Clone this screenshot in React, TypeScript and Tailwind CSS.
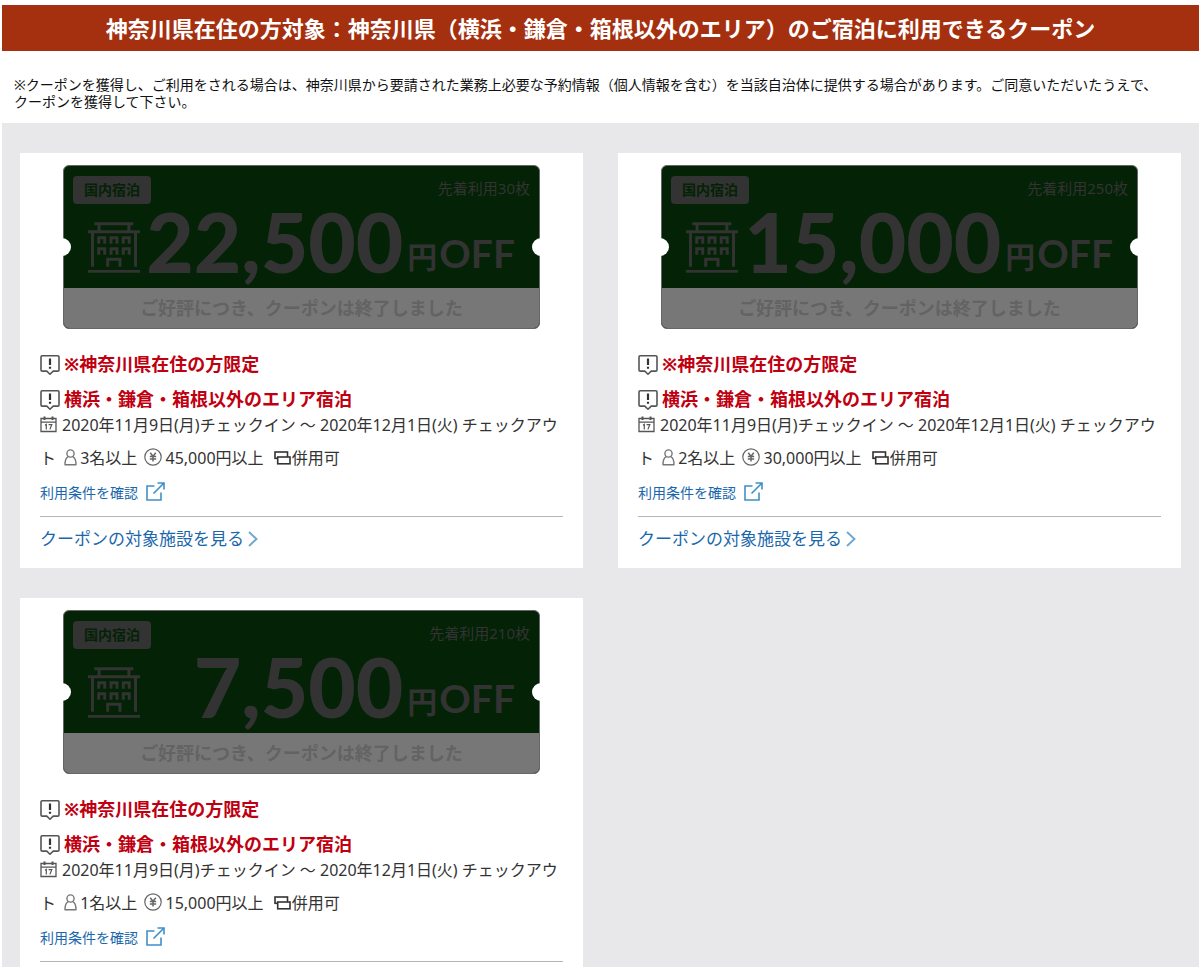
type Coupon = {
  id: string;
  amount: string;
  limit: string;
  people: string;
  minimum: string;
};

const coupons: Coupon[] = [
  { id: "c22500", amount: "22,500", limit: "先着利用30枚", people: "3名以上", minimum: "45,000円以上" },
  { id: "c15000", amount: "15,000", limit: "先着利用250枚", people: "2名以上", minimum: "30,000円以上" },
  { id: "c7500", amount: "7,500", limit: "先着利用210枚", people: "1名以上", minimum: "15,000円以上" },
];

function HotelIcon() {
  return (
    <svg viewBox="0 0 157 152" className="h-[51px] w-[52px] shrink-0" fill="#333333" aria-hidden="true">
      <path fillRule="evenodd" d="M19 0h118v9h-9v15h29v9h-9v101h-9V33H18v101H9V33H0v-9h29V9H19zM38 9v15h81V9z" />
      <path d="M0 144h157v8H0z" />
      <path d="M28 42h27v23h-9V51h-9v14h-9zM65 42h27v23h-9V51h-9v14h-9zM102 42h27v23h-9V51h-9v14h-9z" />
      <path d="M28 75h27v23h-9V84h-9v14h-9zM65 75h27v23h-9V84h-9v14h-9zM102 75h27v23h-9V84h-9v14h-9z" />
      <path d="M55 107h46v27h-9v-18H64v18h-9z" />
    </svg>
  );
}

function AlertIcon() {
  return (
    <svg viewBox="0 0 20 22" className="mt-[2px] h-[22px] w-5 shrink-0" fill="none" stroke="#555555" strokeWidth="1.6" aria-hidden="true">
      <path d="M2.200 1.700h15.600q1.200 0 1.200 1.200v13q0 1.200-1.200 1.200h-4.600L10 20.200l-3.200-3.100H2.200Q1 17.100 1 15.900v-13q0-1.200 1.200-1.200z" strokeLinejoin="round" />
      <path d="M10 4.500v6.500M10 12.700v2" stroke="#333333" strokeWidth="2.200" />
    </svg>
  );
}

function CalendarIcon() {
  return (
    <svg viewBox="0 0 17 17" className="mr-[5px] inline-block h-[17px] w-[17px] align-[-2px]" fill="none" stroke="#555555" aria-hidden="true">
      <path d="M1 2.500h15v13H1zM1 6.200h15" strokeWidth="1.300" />
      <path d="M4.500 0.500v3.600M12.500 0.500v3.600" strokeWidth="2" />
      <path d="M5 9.200l1.300-.8v5M8.600 8.700h3.200l-1.900 4.700" strokeWidth="1.200" />
    </svg>
  );
}

function PersonIcon() {
  return (
    <svg viewBox="0 0 13 17" className="mr-[3px] inline-block h-[17px] w-[13px] align-[-2px]" fill="none" stroke="#777777" strokeWidth="1.400" aria-hidden="true">
      <circle cx="6.500" cy="4.500" r="3.600" />
      <path d="M4.200 7.600C2 8.600 1 11 1 15.700h11c0-4.700-1-7.100-3.200-8.100" strokeLinejoin="round" />
    </svg>
  );
}

function YenIcon() {
  return (
    <svg viewBox="0 0 18 18" className="mr-1 inline-block h-[18px] w-[18px] align-[-2px]" fill="none" stroke="#666666" strokeWidth="1.200" aria-hidden="true">
      <circle cx="9" cy="9" r="8.200" />
      <path d="M6.200 4.800L9 8.200l2.800-3.400M9 8.200v5.300M5.800 8.500h6.400M5.800 10.900h6.400" strokeWidth="1.500" />
    </svg>
  );
}

function CombineIcon() {
  return (
    <svg viewBox="0 0 17 14" className="mr-px inline-block h-[14px] w-[17px] align-[-1px]" fill="#ffffff" stroke="#333333" strokeWidth="1.600" aria-hidden="true">
      <rect x="1" y="1" width="12.500" height="6.300" />
      <rect x="3.700" y="6" width="12.300" height="6.800" />
    </svg>
  );
}

function ExternalIcon() {
  return (
    <svg viewBox="0 0 19 19" className="-mt-1 h-[19px] w-[19px]" fill="none" stroke="#3f8fc9" strokeWidth="1.600" aria-hidden="true">
      <path d="M8.500 4H1v14h14v-7.500" />
      <path d="M7.500 11.500L18 1M11.500 1H18v6.500" />
    </svg>
  );
}

function ChevronIcon() {
  return (
    <svg viewBox="0 0 10 16" className="h-4 w-[10px]" fill="none" stroke="#6fa8d0" strokeWidth="1.900" aria-hidden="true">
      <path d="M1 1l7.500 7L1 15" />
    </svg>
  );
}

function Ticket({ amount, limit }: { amount: string; limit: string }) {
  return (
    <div className="relative mx-auto w-full max-w-[477px]">
      <div className="overflow-hidden rounded-md border border-[#666666] bg-[#042206] text-[#333333]">
        <div className="flex h-[122px] flex-col">
          <div className="flex items-start justify-between pt-[10px] pr-[9px] pl-[9px]">
            <span className="rounded bg-[#333333] px-[11px] text-sm leading-7 font-bold text-[#042206]">国内宿泊</span>
            <span className="text-[15px] leading-6">{limit}</span>
          </div>
          <div className="flex items-start justify-between pr-6 pl-6">
            <div className="pt-[18px]">
              <HotelIcon />
            </div>
            <p className="flex items-start gap-1 pt-px font-bold whitespace-nowrap">
              <span className="font-['Lato',sans-serif] text-[82px] leading-[72px] font-black">{amount}</span>
              <span className="flex items-baseline gap-[2px] pt-8">
                <span className="text-[30px] leading-8">円</span>
                <span className="font-['Lato',sans-serif] text-[39px] leading-8">OFF</span>
              </span>
            </p>
          </div>
        </div>
        <p className="bg-[#777777] text-center text-lg leading-10 font-bold text-[#636363]">
          ご好評につき、クーポンは終了しました
        </p>
      </div>
      <span className="absolute top-1/2 -left-[10px] h-[18px] w-[18px] -translate-y-1/2 rounded-full bg-white" />
      <span className="absolute top-1/2 -right-[10px] h-[18px] w-[18px] -translate-y-1/2 rounded-full bg-white" />
    </div>
  );
}

function CouponCard({ coupon }: { coupon: Coupon }) {
  return (
    <article className="bg-white px-5 pt-3 pb-[19px]">
      <Ticket amount={coupon.amount} limit={coupon.limit} />
      <div className="mt-[25px] flex flex-col gap-[15px] text-lg leading-5 font-bold text-[#bf0010]">
        <p className="flex h-5 items-center gap-1">
          <AlertIcon />
          ※神奈川県在住の方限定
        </p>
        <p className="flex h-5 items-center gap-1">
          <AlertIcon />
          横浜・鎌倉・箱根以外のエリア宿泊
        </p>
      </div>
      <p className="text-base leading-[33px] text-[#333333]">
        <CalendarIcon />
        2020年11月9日(月)チェックイン 〜 2020年12月1日(火) チェックアウト{" "}
        <span className="ml-1 whitespace-nowrap">
          <PersonIcon />
          {coupon.people}
        </span>{" "}
        <span className="ml-[2px] whitespace-nowrap">
          <YenIcon />
          {coupon.minimum}
        </span>{" "}
        <span className="ml-[6px] whitespace-nowrap">
          <CombineIcon />
          併用可
        </span>
      </p>
      <div className="mt-2 flex border-b border-[#b5b5b5] pb-[13px]">
        <a href="#terms" className="flex h-5 items-center gap-2 text-sm leading-5 text-[#1a67ab]">
          利用条件を確認
          <ExternalIcon />
        </a>
      </div>
      <div className="mt-3 flex">
        <a href="#hotels" className="flex h-5 items-center gap-1 text-[17px] leading-5 text-[#1a67ab]">
          クーポンの対象施設を見る
          <ChevronIcon />
        </a>
      </div>
    </article>
  );
}

export default function App() {
  return (
    <main className="bg-white pt-[5px] pr-px pl-[2px] font-['Noto_Sans','Noto_Sans_CJK_JP',sans-serif]" lang="ja">
      <h1 className="bg-[#a53010] px-3 text-center text-[22px] leading-[46px] font-bold text-white">
        神奈川県在住の方対象：神奈川県（横浜・鎌倉・箱根以外のエリア）のご宿泊に利用できるクーポン
      </h1>
      <p className="px-3 pt-[25px] pb-[13px] text-sm leading-[17px] text-[#111111]">
        ※クーポンを獲得し、ご利用をされる場合は、神奈川県から要請された業務上必要な予約情報（個人情報を含む）を当該自治体に提供する場合があります。ご同意いただいたうえで、
        <br />
        クーポンを獲得して下さい。
      </p>
      <section className="grid grid-cols-2 gap-x-[35px] gap-y-[30px] bg-[#e8e8ea] px-[18px] py-[30px]">
        {coupons.map((c) => (
          <CouponCard key={c.id} coupon={c} />
        ))}
      </section>
    </main>
  );
}
